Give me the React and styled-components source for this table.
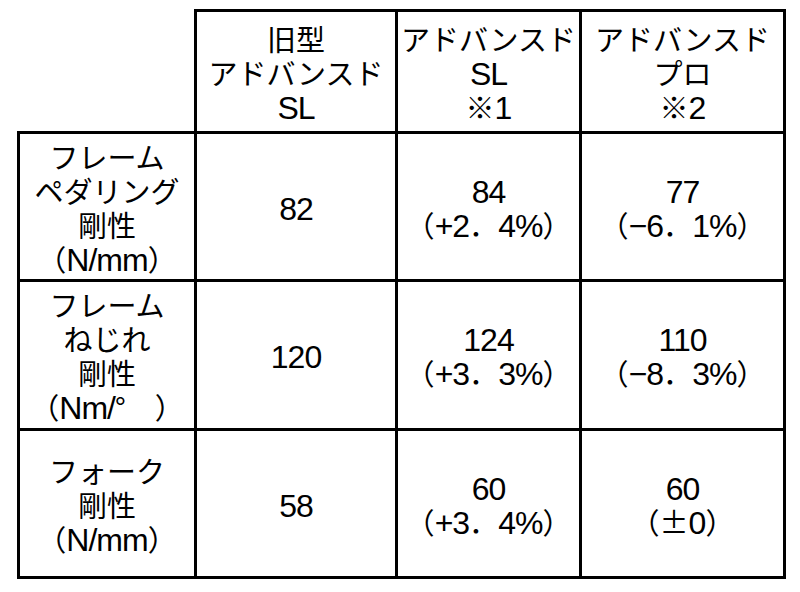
import React from "react";
import styled, { createGlobalStyle } from "styled-components";

const LATIN = /([\x21-\x7E\u2212]+)/;
const LATIN_ONLY = /^[\x21-\x7E\u2212]+$/;

const columns = [177, 201, 184, 204];

const heads = [
    ["旧型", "アドバンスド", "SL"],
    ["アドバンスド", "SL", "※1"],
    ["アドバンスド", "プロ", "※2"],
];

const rows = [
    {
        label: ["フレーム", "ペダリング", "剛性", "（N/mm）"],
        height: 145,
        values: [["82"], ["84", "（+2．4%）"], ["77", "（−6．1%）"]],
    },
    {
        label: ["フレーム", "ねじれ", "剛性", "（Nm/°\u3000）"],
        height: 146,
        values: [["120"], ["124", "（+3．3%）"], ["110", "（−8．3%）"]],
    },
    {
        label: ["フォーク", "剛性", "（N/mm）"],
        height: 145,
        values: [["58"], ["60", "（+3．4%）"], ["60", "（±0）"]],
    },
];

// latin runs get their own face, the rest stays in the CJK face
const mix = (text) =>
    text
        .split(LATIN)
        .filter(Boolean)
        .map((part, i) =>
            LATIN_ONLY.test(part)
                ? <Num key={i}>{part}</Num>
                : <React.Fragment key={i}>{part}</React.Fragment>
        );

const Lines = ({ lines }) => (
    <React.Fragment>
        {lines.map((line, i) => (
            <Line key={i}>{mix(line)}</Line>
        ))}
    </React.Fragment>
);

const App = () => {
    return (
        <React.Fragment>
            <GlobalStyle />
            <Page>
                <Table>
                    <colgroup>
                        {columns.map((w, i) => (
                            <col key={i} style={{ width: w }} />
                        ))}
                    </colgroup>
                    <thead>
                        <tr>
                            <Corner />
                            {heads.map((h, i) => (
                                <HeadCell key={i}>
                                    <Lines lines={h} />
                                </HeadCell>
                            ))}
                        </tr>
                    </thead>
                    <tbody>
                        {rows.map((row, r) => (
                            <tr key={r}>
                                <Cell $h={row.height}>
                                    <Lines lines={row.label} />
                                </Cell>
                                {row.values.map((v, i) => (
                                    <Cell key={i} $h={row.height}>
                                        <Lines lines={v} />
                                    </Cell>
                                ))}
                            </tr>
                        ))}
                    </tbody>
                </Table>
            </Page>
        </React.Fragment>
    );
};

const GlobalStyle = createGlobalStyle`
    html, body {
        margin: 0;
        padding: 0;
        background: #fff;
    }
    body {
        font-family: "Noto Sans CJK JP", sans-serif;
        color: #000;
    }
`;

const Page = styled.div`
    padding: 9px 0 0 17px;
`;

const Table = styled.table`
    border-collapse: collapse;
    table-layout: fixed;
    width: 766px;
`;

const Cell = styled.td`
    height: ${(props) => props.$h}px;
    padding: 0;
    border: 3px solid #000;
    text-align: center;
    vertical-align: middle;
    font-size: 29px;
    line-height: 34px;
    font-weight: 400;
    overflow: hidden;
`;

const HeadCell = styled(Cell).attrs({ as: "th", $h: 119 })``;

const Corner = styled.th`
    height: 119px;
    padding: 0;
    border: none;
    border-right: 3px solid #000;
    border-bottom: 3px solid #000;
`;

const Line = styled.span`
    display: block;
    height: 34px;
    white-space: pre;
`;

const Num = styled.span`
    font-family: "Liberation Sans", Arial, sans-serif;
    font-size: 32px;
    line-height: 0;
    letter-spacing: -1px;
`;

export default App;
